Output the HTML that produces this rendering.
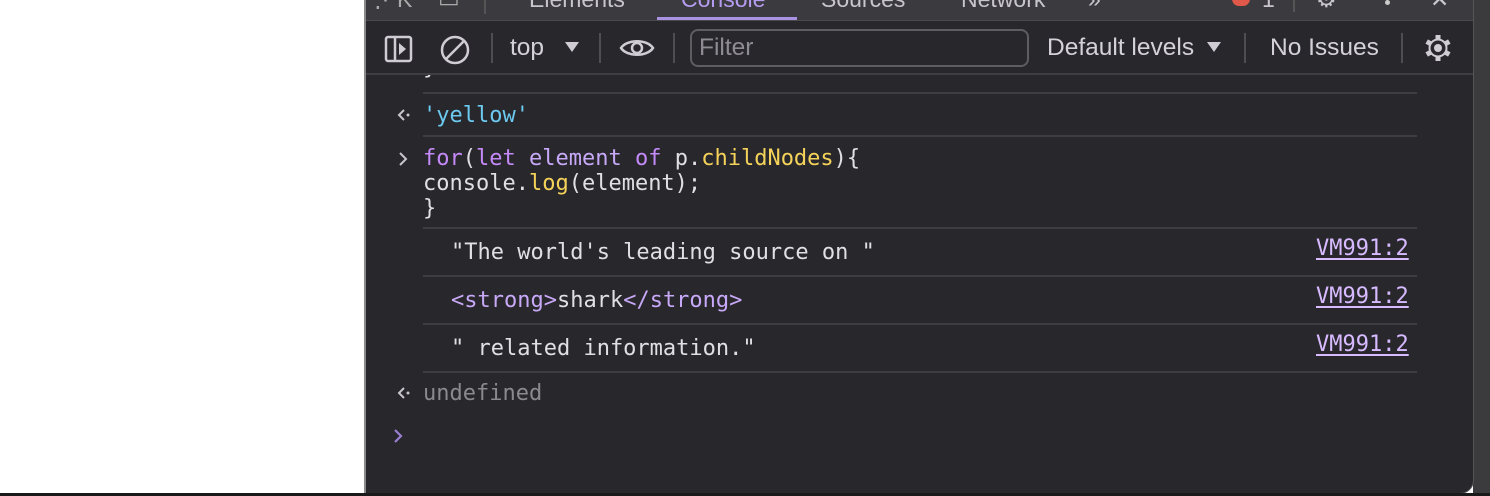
<!DOCTYPE html>
<html><head><meta charset="utf-8"><style>
*{margin:0;padding:0;box-sizing:border-box}
body{width:1490px;height:496px;background:#fff;position:relative;overflow:hidden;font-family:"Liberation Sans",sans-serif}
.abs{position:absolute}
#outer{left:1473px;top:0;width:17px;height:496px;background:#3b3b3d}
#panel{left:364px;top:0;width:1110px;height:494px;background:#28272c;border-left:2px solid #8a8a8a;border-right:1px solid #555;border-bottom:1px solid #555;border-bottom-right-radius:14px;overflow:hidden}
#bottom{left:0;top:493px;width:1490px;height:3px;background:#1a1a1a}
#tabs{left:0;top:0;width:1110px;height:21px;background:#3b3a3f;border-bottom:1px solid #4a494e;z-index:3}
.tab{position:absolute;top:-14px;font-size:23px;color:#c8c6cc}
#tb{left:0;top:21px;width:1110px;height:54px;background:#28272c;border-bottom:2px solid #3f3e43;z-index:2}
.ui{position:absolute;font-size:24.5px;color:#d4d2d8;top:13px}
.sep{position:absolute;top:12px;width:2px;height:30px;background:#4e4d52}
.mono{font-family:"DejaVu Sans Mono","Liberation Mono",monospace;font-size:22px;position:absolute;white-space:pre;color:#e0dfe3}
.hl{position:absolute;height:2px;background:#3e3d42;left:57px;width:994px}
.link{color:#d7baff;text-decoration:underline;text-underline-offset:3px}
.back{position:absolute;left:30px}
</style></head><body>
<div class="abs" id="outer"></div>
<div class="abs" id="panel">
 <div class="abs" id="tabs">
  <div class="tab" style="left:8px;color:#aaa">⋰K</div>
  <div class="tab" style="left:72px;color:#aaa">▭</div>
  <div class="abs" style="left:118px;top:0;width:2px;height:14px;background:#555"></div>
  <div class="tab" style="left:163px">Elements</div>
  <div class="tab" style="left:315px;color:#b59cf0">Console</div>
  <div class="abs" style="left:291px;top:17px;width:140px;height:3px;background:#a992e2"></div>
  <div class="tab" style="left:455px">Sources</div>
  <div class="tab" style="left:595px">Network</div>
  <div class="tab" style="left:722px">»</div>
  <div class="abs" style="left:866px;top:-8px;width:18px;height:14px;border-radius:9px;background:#e0584a"></div>
  <div class="tab" style="left:896px">1</div>
  <div class="abs" style="left:927px;top:0;width:2px;height:12px;background:#555"></div>
  <div class="tab" style="left:950px">⚙</div>
  <div class="abs" style="left:1019px;top:0;width:5px;height:5px;border-radius:3px;background:#ccc"></div>
  <div class="tab" style="left:1064px">✕</div>
 </div>
 <div class="abs" id="tb">
  <svg class="abs" style="left:18px;top:14px" width="30" height="28" viewBox="0 0 30 28"><rect x="2" y="2" width="25" height="24" rx="2" fill="none" stroke="#cfcdd3" stroke-width="2.5"/><line x1="11" y1="2" x2="11" y2="26" stroke="#cfcdd3" stroke-width="2.5"/><path d="M15 8l7 6-7 6z" fill="#cfcdd3"/></svg>
  <svg class="abs" style="left:73px;top:13px" width="32" height="32" viewBox="0 0 32 32"><circle cx="16" cy="16" r="13" fill="none" stroke="#cfcdd3" stroke-width="2.5"/><line x1="7" y1="25" x2="25" y2="7" stroke="#cfcdd3" stroke-width="2.5"/></svg>
  <div class="sep" style="left:125px"></div>
  <div class="ui" style="left:144px">top</div>
  <svg class="abs" style="left:198px;top:20px" width="16" height="12"><path d="M1 1h14l-7 10z" fill="#cfcdd3"/></svg>
  <div class="sep" style="left:233px"></div>
  <svg class="abs" style="left:253px;top:15px" width="36" height="24" viewBox="0 0 36 24"><path d="M2 12C8 3 28 3 34 12C28 21 8 21 2 12z" fill="none" stroke="#cfcdd3" stroke-width="2.5"/><circle cx="18" cy="12" r="5" fill="none" stroke="#cfcdd3" stroke-width="2.5"/></svg>
  <div class="sep" style="left:307px"></div>
  <div class="abs" style="left:324px;top:8px;width:339px;height:38px;border:2px solid #5e5d62;border-radius:8px"></div>
  <div class="ui" style="left:333px;color:#8e8c92">Filter</div>
  <div class="ui" style="left:681px">Default levels</div>
  <svg class="abs" style="left:840px;top:20px" width="16" height="12"><path d="M1 1h14l-7 10z" fill="#cfcdd3"/></svg>
  <div class="sep" style="left:878px"></div>
  <div class="ui" style="left:904px">No Issues</div>
  <div class="sep" style="left:1035px"></div>
  <svg class="abs" style="left:1057px;top:12px" width="30" height="30" viewBox="0 0 30 30"><g stroke="#cfcdd3" stroke-width="5" stroke-linecap="butt"><line x1="15" y1="2" x2="15" y2="28"/><line x1="3.7" y1="8.5" x2="26.3" y2="21.5"/><line x1="3.7" y1="21.5" x2="26.3" y2="8.5"/></g><circle cx="15" cy="15" r="9.5" fill="#cfcdd3"/><circle cx="15" cy="15" r="7.5" fill="#28272c"/><circle cx="15" cy="15" r="4" fill="#cfcdd3"/></svg>
 </div>
 <div class="mono" style="left:57px;top:55px">}</div>
 <div class="hl" style="top:92px"></div>
 <svg class="back" style="top:108px" width="16" height="14" viewBox="0 0 16 14"><path d="M8 2L3 7l5 5" fill="none" stroke="#c8c6cc" stroke-width="2"/><circle cx="12" cy="7" r="1.5" fill="#c8c6cc"/></svg>
 <div class="mono" style="left:57px;top:103px;color:#6cc9f0">'yellow'</div>
 <div class="hl" style="top:135px"></div>
 <svg class="abs" style="left:32px;top:151px" width="12" height="16" viewBox="0 0 12 16"><path d="M2 2l6 6-6 6" fill="none" stroke="#c8c6cc" stroke-width="2"/></svg>
 <div class="mono" style="left:57px;top:146px"><span style="color:#c58af9">for</span>(<span style="color:#c58af9">let</span> <span style="color:#c7a9f7">element</span> <span style="color:#c58af9">of</span> p.<span style="color:#f5d35a">childNodes</span>){
console.<span style="color:#f5d35a">log</span>(element);
}</div>
 <div class="hl" style="top:227px"></div>
 <div class="mono" style="left:85px;top:240px">"The world's leading source on "</div>
 <div class="mono link" style="left:950px;top:236px">VM991:2</div>
 <div class="hl" style="top:275px"></div>
 <div class="mono" style="left:85px;top:288px"><span style="color:#c7a9f7">&lt;strong&gt;</span>shark<span style="color:#c7a9f7">&lt;/strong&gt;</span></div>
 <div class="mono link" style="left:950px;top:284px">VM991:2</div>
 <div class="hl" style="top:323px"></div>
 <div class="mono" style="left:85px;top:336px">" related information."</div>
 <div class="mono link" style="left:950px;top:332px">VM991:2</div>
 <div class="hl" style="top:371px"></div>
 <svg class="back" style="top:386px" width="16" height="14" viewBox="0 0 16 14"><path d="M8 2L3 7l5 5" fill="none" stroke="#c8c6cc" stroke-width="2"/><circle cx="12" cy="7" r="1.5" fill="#c8c6cc"/></svg>
 <div class="mono" style="left:57px;top:381px;color:#8a898e">undefined</div>
 <svg class="abs" style="left:27px;top:428px" width="12" height="16" viewBox="0 0 12 16"><path d="M2 2l6 6-6 6" fill="none" stroke="#9a7fd0" stroke-width="2.2"/></svg>
</div>
<div class="abs" id="bottom"></div>
</body></html>
